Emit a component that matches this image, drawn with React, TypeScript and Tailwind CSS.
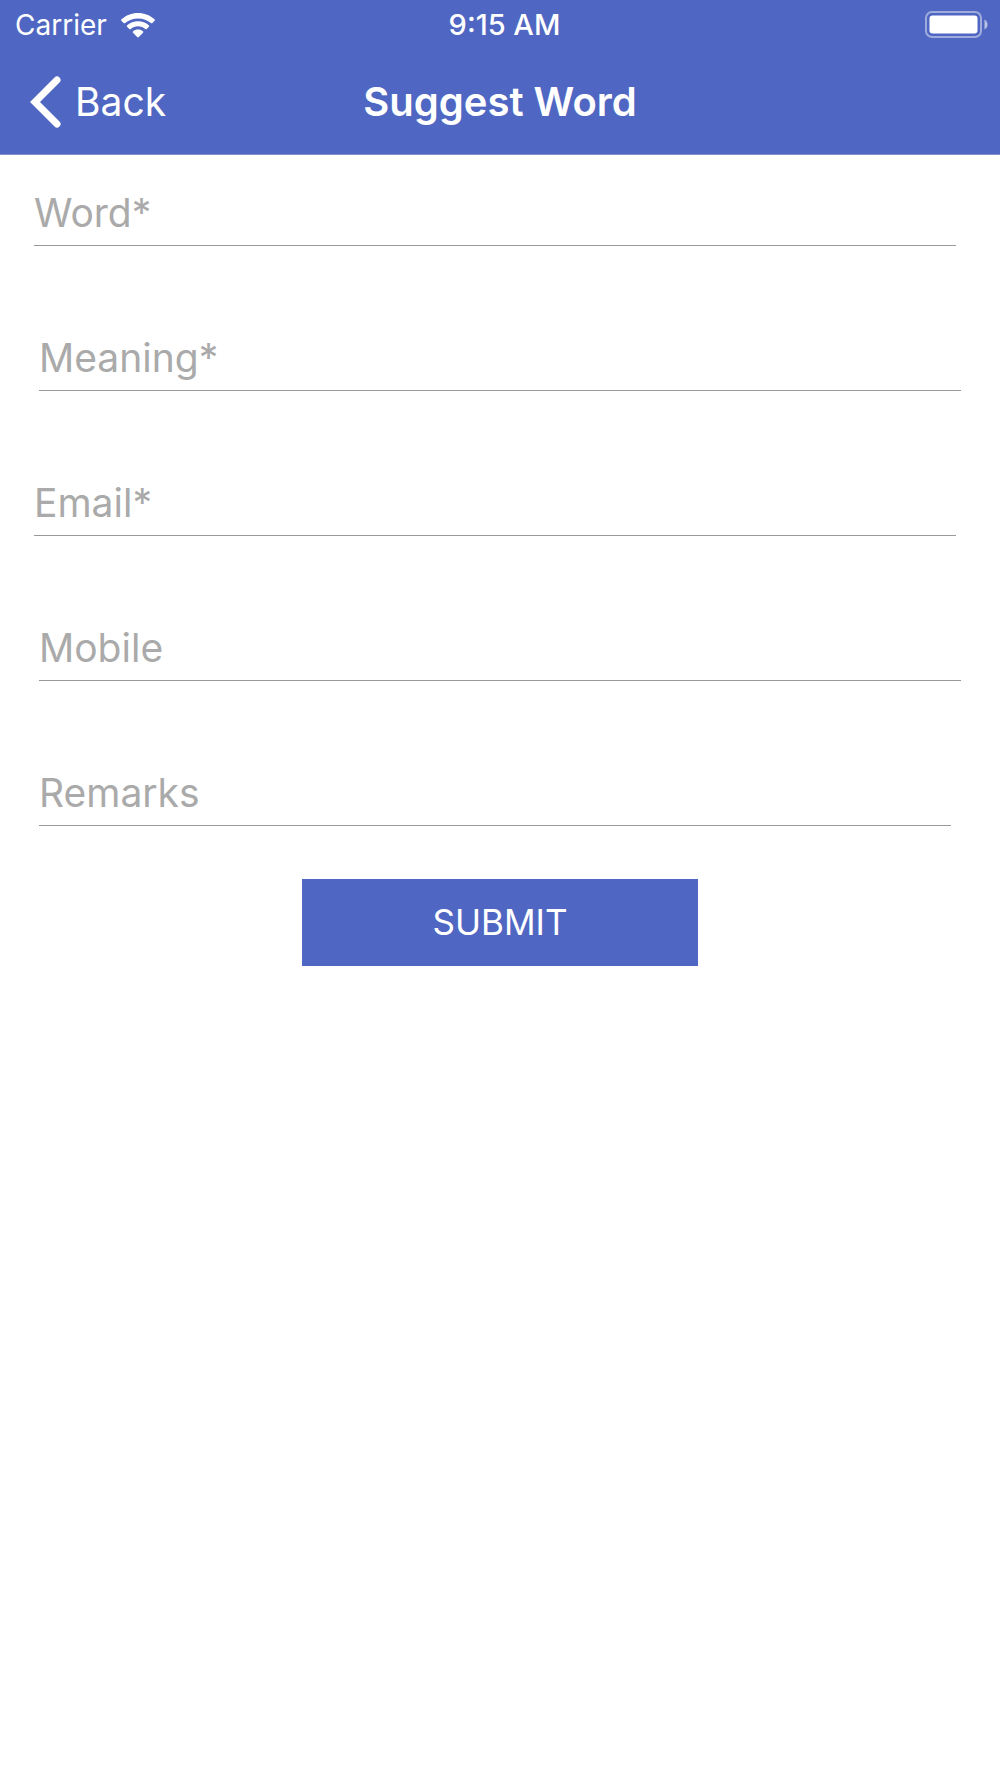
import { FormEvent, useState } from 'react';
import clsx from 'clsx';

const fields = [
  { name: 'word', label: 'Word*', type: 'text', spacing: 'ml-[34px] mr-[44px]' },
  { name: 'meaning', label: 'Meaning*', type: 'text', spacing: 'ml-[39px] mr-[39px]' },
  { name: 'email', label: 'Email*', type: 'email', spacing: 'ml-[34px] mr-[44px]' },
  { name: 'mobile', label: 'Mobile', type: 'tel', spacing: 'ml-[39px] mr-[39px]' },
  { name: 'remarks', label: 'Remarks', type: 'text', spacing: 'ml-[39px] mr-[49px]' },
];

function WifiIcon() {
  return (
    <svg width="34" height="25" viewBox="0 0 34 25" aria-hidden="true" fill="#fff">
      <path d="M17 0c6.4 0 12.2 2.4 16.5 6.3.5.5.5 1.1.1 1.5l-2.2 2.2c-.4.4-1 .4-1.5 0C26.6 7.1 22 5.4 17 5.4S7.4 7.1 4.1 10c-.5.4-1.1.4-1.5 0L.4 7.8C0 7.4 0 6.800.5 6.300 4.8 2.4 10.6 0 17 0z" />
      <path d="M17 8.2c4.1 0 7.9 1.5 10.8 4 .5.5.5 1.1.1 1.5l-2.2 2.200c-.4.4-1 .4-1.5 0-2-1.7-4.5-2.7-7.2-2.7s-5.2 1-7.2 2.7c-.5.4-1.1.4-1.5 0l-2.2-2.2c-.4-.4-.4-1 .1-1.5 2.9-2.5 6.7-4 10.8-4z" />
      <path d="M17 16.6c1.9 0 3.6.6 4.9 1.7.5.4.5 1 .1 1.4l-4.2 4.3c-.5.5-1.1.5-1.6 0L12 19.7c-.4-.4-.4-1 .1-1.4 1.3-1.1 3-1.7 4.9-1.7z" />
    </svg>
  );
}

function BatteryIcon() {
  return (
    <svg width="63" height="28" viewBox="0 0 63 28" fill="none" aria-hidden="true">
      <rect x="1" y="1" width="55" height="25" rx="6" stroke="#fff" strokeOpacity="0.45" strokeWidth="2" />
      <rect x="4.5" y="4.5" width="48" height="18" rx="3" fill="#fff" />
      <path d="M59.5 8.5c2 1 3 3 3 5s-1 4-3 5z" fill="#fff" fillOpacity="0.6" />
    </svg>
  );
}

function StatusBar() {
  return (
    <div className="grid grid-cols-[1fr_auto_1fr] items-center pl-[15px] pr-3 h-[50px] text-[28px] leading-8">
      <div className="flex items-center gap-[14px]">
        <span>Carrier</span>
        <WifiIcon />
      </div>
      <span className="pl-1.5 text-[29px] font-medium">9:15 AM</span>
      <div className="flex justify-end">
        <BatteryIcon />
      </div>
    </div>
  );
}

export default function SuggestWord() {
  const [values, setValues] = useState<Record<string, string>>({});

  const onSubmit = (e: FormEvent) => {
    e.preventDefault();
    console.log(values);
  };

  return (
    <div className="min-h-screen bg-white font-['Inter',sans-serif]">
      <header className="bg-[#4f67c2] text-white border-b border-[#7f91d3]">
        <StatusBar />
        <div className="grid grid-cols-[1fr_auto_1fr] items-center h-[104px] px-[30px] text-[40px] leading-12">
          <button type="button" className="flex items-center gap-[14px] justify-self-start text-[39px]">
            <svg width="31" height="52" viewBox="0 0 31 52" fill="none" aria-hidden="true">
              <path d="M27 4L5 26l22 22" stroke="#fff" strokeWidth="7" strokeLinecap="round" />
            </svg>
            Back
          </button>
          <h1 className="font-semibold">Suggest Word</h1>
        </div>
      </header>

      <form className="pt-[31px]" onSubmit={onSubmit}>
        <div className="flex flex-col gap-[85px]">
          {fields.map((field) => (
            <div key={field.name} className={clsx('flex', field.spacing)}>
              <input
                id={field.name}
                name={field.name}
                type={field.type}
                aria-label={field.label}
                placeholder={field.label}
                value={values[field.name] ?? ''}
                onChange={(e) => setValues({ ...values, [field.name]: e.target.value })}
                className="w-full h-[60px] pb-1.5 border-b border-[#999] bg-transparent text-[39px] text-black placeholder:text-[#aaa] outline-none"
              />
            </div>
          ))}
        </div>
        <button type="submit" className="block mx-auto mt-[53px] w-[396px] h-[87px] bg-[#4f67c2] text-white text-[35px]">
          SUBMIT
        </button>
      </form>
    </div>
  );
}
